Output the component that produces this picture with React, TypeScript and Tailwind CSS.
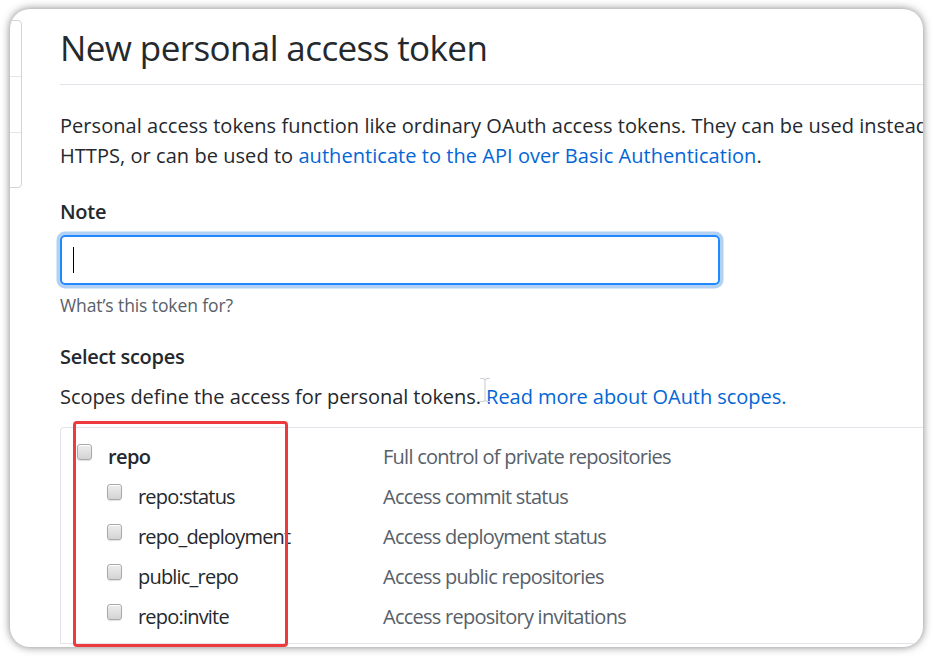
import React from "react";

function Checkbox() {
  return (
    <span className="inline-block w-[15px] h-[16px] shrink-0 rounded-[3px] border border-[#a9a9a9] bg-linear-to-b from-[#eeeeee] to-[#d3d3d3] shadow-[inset_0_1px_0_#ffffff,0_1px_1px_rgba(0,0,0,0.12)]" />
  );
}

const subs: [string, string][] = [
  ["repo:status", "Access commit status"],
  ["repo_deployment", "Access deployment status"],
  ["public_repo", "Access public repositories"],
  ["repo:invite", "Access repository invitations"],
];

export default function App() {
  return (
    <div className="w-[933px] h-[658px] bg-white pl-[10px] pt-[9px] font-['Open_Sans',sans-serif] text-[#24292e]">
      <div className="relative w-[913px] h-[638px] rounded-[20px] bg-white overflow-hidden shadow-[0_0_9px_rgba(0,0,0,0.5)] flex">
        {/* sidebar */}
        <div className="w-[12px] shrink-0 pt-[11px]">
          <div className="ml-[-10px] w-[22px] border border-[#d1d5da] rounded-r-[4px] flex flex-col">
            <div className="h-[56px] border-b border-[#e1e4e8]" />
            <div className="h-[56px] border-b border-[#e1e4e8]" />
            <div className="h-[54px]" />
          </div>
        </div>

        {/* content */}
        <div className="ml-[38px] w-[1100px] shrink-0 pt-[17px]">
          <div className="pb-[14px] border-b border-[#e1e4e8]">
            <h1 className="text-[35px] leading-[44px] font-normal tracking-[-0.6px]">New personal access token</h1>
          </div>

          <p className="mt-[26px] text-[20px] leading-[30px] tracking-[0.05px] whitespace-nowrap">
            Personal access tokens function like ordinary OAuth access tokens. They can be used instead of a password for Git over
            <br />
            HTTPS, or can be used to <span className="text-[#0366d6]">authenticate to the API over Basic Authentication</span>.
          </p>

          <div className="mt-[26px] text-[20px] leading-[30px] font-semibold tracking-[-0.3px]">Note</div>

          <div className="mt-[8px] w-[660px] h-[50px] border-2 border-[#2188ff] rounded-[5px] shadow-[0_0_0_3.5px_rgba(3,102,214,0.3)] flex items-center pl-[11px]">
            <span className="block w-[1px] h-[26px] bg-black" />
          </div>

          <div className="mt-[7px] text-[17.5px] leading-[26px] text-[#586069] tracking-[-0.1px]">What’s this token for?</div>

          <div className="mt-[24px] text-[20px] leading-[30px] font-semibold tracking-[-0.3px]">Select scopes</div>

          <p className="mt-[10px] text-[20px] leading-[30px] tracking-[-0.05px] whitespace-nowrap">
            Scopes define the access for personal tokens. <span className="text-[#0366d6]">Read more about OAuth scopes.</span>
          </p>

          <div className="relative mt-[15px] w-[1000px] border-t border-l border-b border-[#e1e4e8] rounded-tl-[4px] pt-[9px] pb-[6px]">
            <div className="h-[40px] flex items-center">
              <div className="w-[322px] flex items-center pl-[16px]">
                <span className="mt-[-6px]"><Checkbox /></span>
                <span className="ml-[16px] text-[20px] font-semibold tracking-[-0.6px]">repo</span>
              </div>
              <span className="text-[20px] text-[#586069] tracking-[-0.75px]">Full control of private repositories</span>
            </div>
            {subs.map(([name, desc]) => (
              <div key={name} className="h-[40px] flex items-center">
                <div className="w-[322px] flex items-center pl-[46px]">
                  <span className="mt-[-6px]"><Checkbox /></span>
                  <span className="ml-[16px] text-[20px] tracking-[-0.8px] whitespace-nowrap">{name}</span>
                </div>
                <span className="text-[20px] text-[#586069] tracking-[-0.75px]">{desc}</span>
              </div>
            ))}
            <div className="absolute left-[12px] top-[-7px] w-[215px] h-[226px] border-[3px] border-[#ec3a3f] rounded-[4px] pointer-events-none" />
          </div>
        </div>

        {/* mouse I-beam cursor */}
        <svg className="absolute left-[468px] top-[368px]" width="14" height="26" viewBox="0 0 14 26">
          <path d="M2 1.5h3.5L7 3l1.5-1.5H12M7 3v20M2 24.5h3.5L7 23l1.5 1.5H12" fill="none" stroke="#cfd3d8" strokeWidth="1.2" />
        </svg>
      </div>
    </div>
  );
}
